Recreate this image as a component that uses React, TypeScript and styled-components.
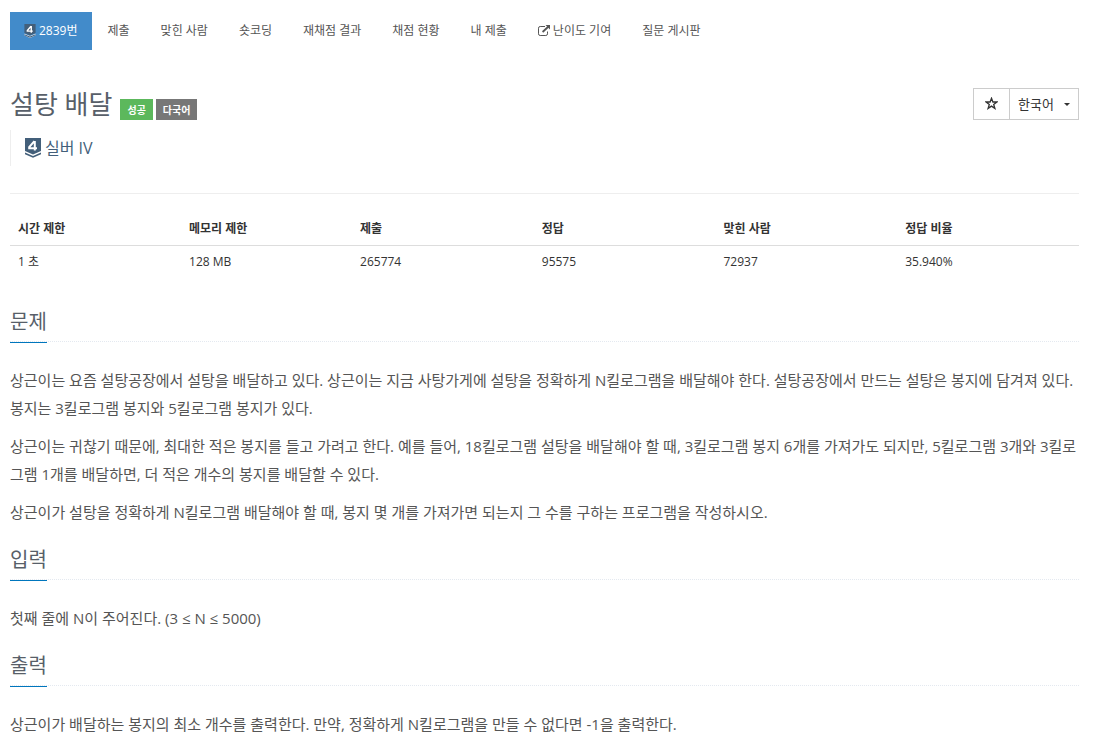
import React from "react";
import styled, { createGlobalStyle } from "styled-components";

const GlobalStyle = createGlobalStyle`
  *, *::before, *::after { box-sizing: border-box; }
  body {
    margin: 0;
    background: #fff;
    color: #333;
    font: 400 12px/20px "Open Sans", "Noto Sans CJK KR", sans-serif;
  }
`;

const Page = styled.div`
  padding: 12px 16px 0 10px;
`;

const Pills = styled.ul`
  display: flex;
  flex-wrap: wrap;
  gap: 1px;
  margin: 0 0 38px;
  padding: 0;
  list-style: none;
`;

const PillLink = styled.a<{ $active?: boolean }>`
  display: flex;
  align-items: center;
  gap: ${(p) => (p.$active ? 3 : 2)}px;
  height: 38px;
  padding: 0 ${(p) => (p.$active ? 14 : 15)}px;
  color: ${(p) => (p.$active ? "#fff" : "#555")};
  background: ${(p) => (p.$active ? "#428bca" : "transparent")};
  text-decoration: none;
`;

const Header = styled.header`
  display: flex;
  justify-content: space-between;
  align-items: flex-start;
`;

const TitleRow = styled.div`
  display: flex;
  align-items: flex-end;
  gap: 3px;
  height: 32px;
`;

const Title = styled.h1`
  margin: 0 5px 0 0;
  color: #585f69;
  font-size: 26px;
  font-weight: 400;
  line-height: 32px;
`;

const Label = styled.span<{ $color: string }>`
  height: 21px;
  padding: 0 7px;
  color: #fff;
  background: ${(p) => p.$color};
  font-size: 10px;
  font-weight: 700;
  line-height: 22px;
`;

const ButtonGroup = styled.div`
  display: flex;
`;

const Button = styled.button`
  display: flex;
  align-items: center;
  gap: 10px;
  height: 32px;
  padding: 0 8px;
  border: 1px solid #ccc;
  background: #fff;
  color: #333;
  font: inherit;
  font-size: 13px;

  & + & { margin-left: -1px; }
`;

const StarButton = styled(Button)`
  padding: 0 11px 2px;
`;

const Caret = styled.span`
  border-top: 3px solid #333;
  border-left: 3px solid transparent;
  border-right: 3px solid transparent;
`;

const Tier = styled.blockquote`
  display: flex;
  align-items: center;
  gap: 4px;
  height: 36px;
  margin: 10px 0 27px;
  padding-left: 14px;
  border-left: 1px solid #eee;
  color: #435f7a;
  font-size: 16px;
`;

const Rule = styled.hr`
  margin: 0 0 19px;
  border: 0;
  border-top: 1px solid #eee;
`;

const InfoTable = styled.table`
  width: 100%;
  margin-bottom: 21px;
  table-layout: fixed;
  border-collapse: collapse;

  th, td {
    height: 32px;
    padding: 0 8px;
    text-align: left;
  }
  th {
    width: 17%;
    border-bottom: 1px solid #ddd;
    font-weight: 700;
  }
  th:nth-child(-n + 2) { width: 16%; }
  td { padding-top: 2px; }
`;

const Section = styled.section`
  padding-top: 6px;
`;

const Headline = styled.div`
  margin-bottom: 24px;
  border-bottom: 1px dotted #e4e9f0;
`;

const Heading = styled.h2`
  display: table;
  margin: 0 0 -2px;
  padding-bottom: 3px;
  border-bottom: 1px solid #0076bd;
  color: #585f69;
  font-size: 20px;
  font-weight: 400;
  line-height: 35px;
`;

const Paragraph = styled.p`
  margin: 0 0 10px;
  color: #555;
  font-size: 15px;
  line-height: 28px;
`;

const TierBadge = ({ width, height }: { width: number; height: number }) => (
  <svg width={width} height={height} viewBox="0 0 16 20" aria-hidden="true">
    <path d="M0 0H16V13L8 16.5L0 13Z" fill="#435f7a" />
    <path d="M0 14L8 17.3L16 14V16.2L8 20L0 16.2Z" fill="#fff" />
    <path d="M0 14.6L8 18L16 14.6V16.2L8 19.8L0 16.2Z" fill="#435f7a" />
    <path d="M9.4 3.2L4.2 9.2V10.2H12M9.8 3V12.6" fill="none" stroke="#fff" strokeWidth="2" />
  </svg>
);

const ExternalIcon = () => (
  <svg width="13" height="12" viewBox="0 0 13 12" fill="none" stroke="#555" aria-hidden="true">
    <path d="M7 1.5H2.2Q.5 1.5 .5 3.2V8.8Q.5 10.5 2.2 10.5H7.8Q9.5 10.5 9.5 8.8V6.5" />
    <path d="M4.6 7L10.5 1.5" strokeWidth="1.8" />
    <path d="M7.5 0H12V4.5Z" fill="#555" stroke="none" />
  </svg>
);

const StarIcon = () => (
  <svg width="13" height="13" viewBox="0 0 13 13" fill="none" stroke="#333" strokeWidth="1.3" aria-hidden="true">
    <path d="M6.5 1.3L7.9 5H11.8L8.7 7.4L9.9 11.4L6.5 9.1L3.1 11.4L4.3 7.4L1.2 5H5.1Z" />
  </svg>
);

const pills = ["제출", "맞힌 사람", "숏코딩", "재채점 결과", "채점 현황", "내 제출", "난이도 기여", "질문 게시판"];

const info = [
  ["시간 제한", "1 초"],
  ["메모리 제한", "128 MB"],
  ["제출", "265774"],
  ["정답", "95575"],
  ["맞힌 사람", "72937"],
  ["정답 비율", "35.940%"],
];

const sections = [
  {
    title: "문제",
    body: [
      "상근이는 요즘 설탕공장에서 설탕을 배달하고 있다. 상근이는 지금 사탕가게에 설탕을 정확하게 N킬로그램을 배달해야 한다. 설탕공장에서 만드는 설탕은 봉지에 담겨져 있다. 봉지는 3킬로그램 봉지와 5킬로그램 봉지가 있다.",
      "상근이는 귀찮기 때문에, 최대한 적은 봉지를 들고 가려고 한다. 예를 들어, 18킬로그램 설탕을 배달해야 할 때, 3킬로그램 봉지 6개를 가져가도 되지만, 5킬로그램 3개와 3킬로그램 1개를 배달하면, 더 적은 개수의 봉지를 배달할 수 있다.",
      "상근이가 설탕을 정확하게 N킬로그램 배달해야 할 때, 봉지 몇 개를 가져가면 되는지 그 수를 구하는 프로그램을 작성하시오.",
    ],
  },
  { title: "입력", body: ["첫째 줄에 N이 주어진다. (3 ≤ N ≤ 5000)"] },
  {
    title: "출력",
    body: ["상근이가 배달하는 봉지의 최소 개수를 출력한다. 만약, 정확하게 N킬로그램을 만들 수 없다면 -1을 출력한다."],
  },
];

export default function App() {
  return (
    <Page>
      <GlobalStyle />
      <nav>
        <Pills>
          <li>
            <PillLink href="#problem" $active>
              <TierBadge width={12} height={14} />
              2839번
            </PillLink>
          </li>
          {pills.map((text) => (
            <li key={text}>
              <PillLink href="#">
                {text === "난이도 기여" && <ExternalIcon />}
                {text}
              </PillLink>
            </li>
          ))}
        </Pills>
      </nav>
      <main id="problem">
        <Header>
          <TitleRow>
            <Title>설탕 배달</Title>
            <Label $color="#5cb85c">성공</Label>
            <Label $color="#777">다국어</Label>
          </TitleRow>
          <ButtonGroup>
            <StarButton type="button" aria-label="즐겨찾기">
              <StarIcon />
            </StarButton>
            <Button type="button" aria-haspopup="menu">
              한국어
              <Caret />
            </Button>
          </ButtonGroup>
        </Header>
        <Tier>
          <TierBadge width={16} height={20} />
          실버 IV
        </Tier>
        <Rule />
        <InfoTable>
          <thead>
            <tr>
              {info.map(([name]) => (
                <th key={name} scope="col">{name}</th>
              ))}
            </tr>
          </thead>
          <tbody>
            <tr>
              {info.map(([name, value]) => (
                <td key={name}>{value}</td>
              ))}
            </tr>
          </tbody>
        </InfoTable>
        {sections.map(({ title, body }) => (
          <Section key={title}>
            <Headline>
              <Heading>{title}</Heading>
            </Headline>
            {body.map((text) => (
              <Paragraph key={text}>{text}</Paragraph>
            ))}
          </Section>
        ))}
      </main>
    </Page>
  );
}
